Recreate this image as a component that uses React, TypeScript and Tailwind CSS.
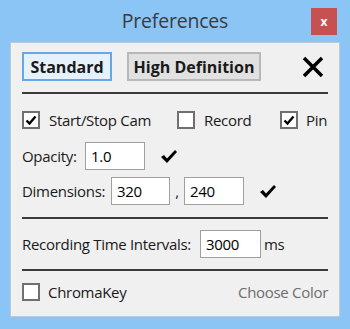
const font = { fontFamily: '"Open Sans", "Noto Sans", sans-serif' };

function Check() {
  return (
    <svg width="12" height="11" viewBox="0 0 12 11">
      <path d="M1.5 5.5 L4.5 8.5 L10.5 1.5" fill="none" stroke="#000" strokeWidth="2.4" />
    </svg>
  );
}

function Box({ checked }: { checked?: boolean }) {
  return (
    <span className="flex h-[18px] w-[18px] shrink-0 items-center justify-center border-2 border-[#707070] bg-white">
      {checked && <Check />}
    </span>
  );
}

function Tick() {
  return (
    <svg width="18" height="15" viewBox="0 0 18 15">
      <path d="M1 8 L4 6 L7 9.5 L15 1 L17 3 L7 14 Z" fill="#000" />
    </svg>
  );
}

function Field({ value, w }: { value: string; w: string }) {
  return (
    <div className={`flex h-[28px] shrink-0 items-center border border-[#a0a0a0] bg-white pl-[5px] text-black ${w}`}>
      {value}
    </div>
  );
}

export default function App() {
  return (
    <div className="flex h-[329px] w-[350px] flex-col bg-[#8bc5f6] text-[#1a1a1a]" style={font}>
      <div className="relative flex h-[42px] items-center justify-center">
        <span className="pb-[1px] text-[19.5px] tracking-[-0.2px] text-[#3b3b3b]">Preferences</span>
        <div className="absolute right-[13px] top-[8px] flex h-[27px] w-[26px] items-center justify-center bg-[#c75050] text-[12px] font-bold text-white">
          x
        </div>
      </div>
      <div className="mx-[10px] flex h-[275px] flex-col border border-[#c0cad4] bg-[#f0f0f0] px-[11px] text-[15px] tracking-[-0.3px]">
        <div className="mt-[9px] flex h-[29px] items-center text-[16px] tracking-normal">
          <div className="flex h-[29px] w-[90px] items-center justify-center border-2 border-[#64a8e8] bg-[#e5f1fb] font-bold">
            Standard
          </div>
          <div className="ml-[15px] flex h-[29px] w-[134px] items-center justify-center border-2 border-[#b8b8b8] bg-[#e1e1e1] font-bold">
            High Definition
          </div>
          <svg className="ml-auto mr-[4px]" width="22" height="22" viewBox="0 0 22 22">
            <path d="M2 2 L20 20 M20 2 L2 20" stroke="#000" strokeWidth="3.5" />
          </svg>
        </div>
        <div className="mt-[11px] h-[2px] bg-[#3a3a3a]" />
        <div className="mt-[17px] flex h-[18px] items-center">
          <div className="flex w-[155px] items-center">
            <Box checked />
            <span className="ml-[9px]">Start/Stop Cam</span>
          </div>
          <div className="flex w-[103px] items-center">
            <Box />
            <span className="ml-[9px]">Record</span>
          </div>
          <Box checked />
          <span className="ml-[8px]">Pin</span>
        </div>
        <div className="mt-[13px] flex h-[28px] items-center">
          <span className="w-[63px]">Opacity:</span>
          <Field value="1.0" w="w-[60px]" />
          <span className="ml-[15px]"><Tick /></span>
        </div>
        <div className="mt-[7px] flex h-[28px] items-center">
          <span className="w-[89px]">Dimensions:</span>
          <Field value="320" w="w-[59px]" />
          <span className="w-[14px] self-end pb-[3px] text-center">,</span>
          <Field value="240" w="w-[60px]" />
          <span className="ml-[15px]"><Tick /></span>
        </div>
        <div className="mt-[12px] h-[2px] bg-[#3a3a3a]" />
        <div className="mt-[11px] flex h-[28px] items-center">
          <span className="w-[178px]">Recording Time Intervals:</span>
          <Field value="3000" w="w-[61px]" />
          <span className="ml-[3px]">ms</span>
        </div>
        <div className="mt-[11px] h-[2px] bg-[#3a3a3a]" />
        <div className="mt-[12px] flex h-[18px] items-center">
          <Box />
          <span className="ml-[8px]">ChromaKey</span>
          <span className="ml-auto text-[#6d6d6d]">Choose Color</span>
        </div>
      </div>
    </div>
  );
}
